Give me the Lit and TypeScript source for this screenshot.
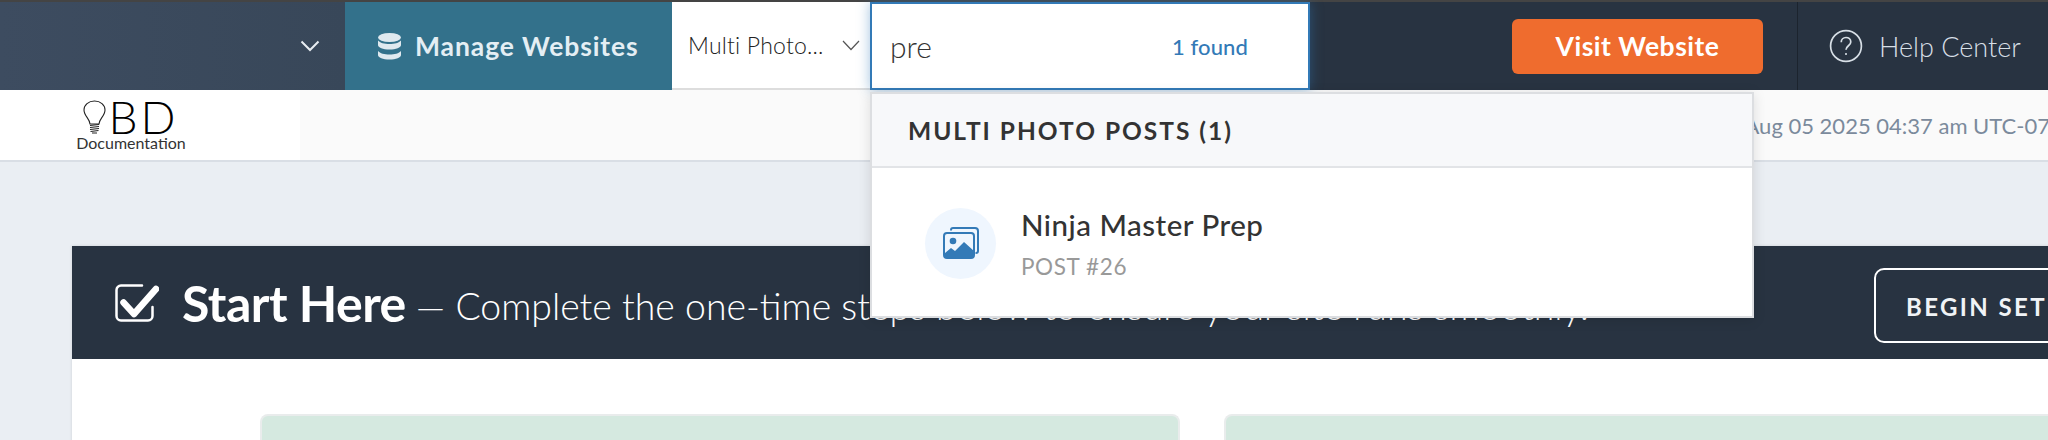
import {LitElement, html, css} from 'lit';
import {customElement} from 'lit/decorators.js';

@customElement('app-root')
export class AppRoot extends LitElement {
  static styles = css`
    :host {
      display: block;
      position: relative;
      width: 2048px;
      height: 440px;
      overflow: hidden;
      background: #eaeef3;
      font-family: Lato, "Noto Sans", sans-serif;
    }
    svg { display: block; flex: none; }

    .nav {
      display: flex;
      height: 88px;
      border-top: 2px solid #444;
      background: #283341;
    }
    .side {
      width: 345px;
      display: flex;
      align-items: center;
      justify-content: flex-end;
      padding-right: 25px;
      box-sizing: border-box;
      background: linear-gradient(90deg, #3d4c60, #384759);
    }
    .manage {
      width: 327px;
      display: flex;
      align-items: center;
      gap: 14px;
      padding-left: 33px;
      box-sizing: border-box;
      background: #33718b;
      color: #e4eef4;
      font-size: 26.5px;
      font-weight: 700;
      letter-spacing: 0.9px;
    }
    .select {
      width: 198px;
      display: flex;
      align-items: center;
      justify-content: space-between;
      padding: 0 10px 0 16px;
      box-sizing: border-box;
      background: #fff;
      border-bottom: 2px solid #ddd;
      color: #222;
      font-size: 23px;
      font-weight: 300;
      letter-spacing: 0.2px;
    }
    .search {
      width: 440px;
      display: flex;
      align-items: center;
      justify-content: space-between;
      padding: 0 60px 0 18px;
      box-sizing: border-box;
      background: #fff;
      border: 2px solid #337ab7;
      box-shadow: 0 0 12px rgba(51, 122, 183, 0.45);
      position: relative;
    }
    .query { font-size: 30px; color: #333; font-weight: 300; }
    .found { font-size: 22px; color: #337ab7; font-weight: 500; letter-spacing: 0.1px; }
    .nav-right {
      flex: 1;
      display: flex;
      align-items: center;
      justify-content: flex-end;
    }
    .visit {
      width: 251px;
      height: 55px;
      display: flex;
      align-items: center;
      justify-content: center;
      border-radius: 6px;
      background: #ef6c2e;
      color: #fff;
      font-size: 26.5px;
      font-weight: 700;
      letter-spacing: 0.5px;
      margin-right: 34px;
    }
    .help {
      width: 251px;
      height: 100%;
      box-sizing: border-box;
      display: flex;
      align-items: center;
      gap: 16px;
      padding-left: 31px;
      border-left: 1px solid #1c242e;
      color: #d7dfe6;
      font-size: 27px;
      font-weight: 300;
    }

    .bar {
      height: 70px;
      display: flex;
      justify-content: space-between;
      background: #fafafa;
      border-bottom: 2px solid #d9dee5;
    }
    .logo {
      width: 300px;
      background: #fff;
      display: flex;
      flex-direction: column;
      align-items: center;
      padding: 8px 38px 0 0;
      box-sizing: border-box;
    }
    .logo-top { display: flex; align-items: center; gap: 2px; height: 37px; }
    .bd { font-size: 46px; line-height: 37px; font-weight: 300; color: #000; letter-spacing: 3px; }
    .doc { font-size: 16px; line-height: 16px; color: #333; font-weight: 400; }
    .date {
      align-self: center;
      white-space: nowrap;
      margin-right: -33px;
      font-size: 22px;
      color: #7b8a9c;
    }

    .page { padding: 84px 0 0 72px; }
    .card {
      width: 2100px;
      background: #fff;
      box-shadow: 0 0 3px rgba(0, 0, 0, 0.12);
    }
    .card-head {
      height: 113px;
      display: flex;
      align-items: center;
      padding-left: 43px;
      box-sizing: border-box;
      background: #283341;
      color: #fff;
    }
    .title { font-size: 50px; font-weight: 700; margin-left: 23px; letter-spacing: -0.5px; }
    .sub { font-size: 37.4px; font-weight: 300; margin: 6px 0 0 10px; white-space: nowrap; }
    .begin {
      position: absolute;
      left: 1874px;
      top: 268px;
      width: 300px;
      height: 75px;
      box-sizing: border-box;
      border: 2px solid #fff;
      border-radius: 10px;
      padding: 22px 0 0 30px;
      color: #f0f3f6;
      font-size: 24px;
      font-weight: 700;
      letter-spacing: 2.4px;
      white-space: nowrap;
    }
    .card-body {
      display: flex;
      gap: 44px;
      padding: 55px 0 0 188px;
    }
    .tile {
      width: 920px;
      height: 60px;
      background: #d5e9e0;
      border: 2px solid #e9ecec;
      border-bottom: 0;
      border-radius: 8px 8px 0 0;
      box-sizing: border-box;
    }
    .tile + .tile { width: 900px; }

    .drop {
      position: absolute;
      left: 870px;
      top: 92px;
      width: 884px;
      height: 226px;
      box-sizing: border-box;
      border: 2px solid #dcdee1;
      background: #fff;
      box-shadow: 0 2px 12px rgba(0, 0, 0, 0.12);
    }
    .drop-head {
      height: 74px;
      display: flex;
      align-items: center;
      padding-left: 36px;
      box-sizing: border-box;
      background: #f7f8fa;
      border-bottom: 2px solid #e2e4e7;
      color: #333;
      font-size: 24.5px;
      font-weight: 700;
      letter-spacing: 2px;
    }
    .hit { display: flex; align-items: center; gap: 25px; padding: 37px 0 0 53px; }
    .hit-icon {
      width: 71px;
      height: 71px;
      border-radius: 50%;
      background: #eff6fe;
      display: flex;
      align-items: center;
      justify-content: center;
    }
    .hit-title { font-size: 29.5px; line-height: 36px; font-weight: 500; color: #333; letter-spacing: 0.5px; margin-top: 2px; }
    .hit-sub { font-size: 22.5px; line-height: 28px; margin-top: 10px; color: #999; letter-spacing: 0.6px; }
  `;

  render() {
    return html`
      <div class="nav">
        <div class="side">
          <svg width="20" height="12" viewBox="0 0 20 12" fill="none" stroke="#e8edf2" stroke-width="2"><path d="M1.5 1.5 10 10l8.5-8.5"/></svg>
        </div>
        <div class="manage">
          <svg width="23" height="27" viewBox="0 0 23 27" fill="#dfe9ef">
            <ellipse cx="11.5" cy="4.5" rx="11.5" ry="4.5"/>
            <path d="M0 7.5c2 2.5 6.500 3.500 11.500 3.500S21 10 23 7.500V12c0 2.500-5 4.500-11.500 4.500S0 14.500 0 12z"/>
            <path d="M0 15c2 2.500 6.500 3.500 11.500 3.500S21 17.500 23 15v4c0 2.500-5 4.500-11.500 4.500S0 21.500 0 19z" transform="translate(0 3)"/>
          </svg>
          <span>Manage Websites</span>
        </div>
        <div class="select">
          <span>Multi Photo...</span>
          <svg width="18" height="11" viewBox="0 0 18 11" fill="none" stroke="#555" stroke-width="1.2"><path d="M1 1l8 8.500L17 1"/></svg>
        </div>
        <div class="search">
          <span class="query">pre</span>
          <span class="found">1 found</span>
        </div>
        <div class="nav-right">
          <div class="visit">Visit Website</div>
          <div class="help">
            <svg width="34" height="34" viewBox="0 0 32 32" fill="none" stroke="#d7dfe6" stroke-width="1.600">
              <circle cx="16" cy="16" r="14.500"/>
              <path d="M11.500 12.500c0-2.800 2-4.500 4.500-4.500s4.500 1.700 4.500 4.200c0 3.500-4.500 3.600-4.500 7.300"/>
              <circle cx="16" cy="23.500" r="1" fill="#d7dfe6" stroke="none"/>
            </svg>
            <span>Help Center</span>
          </div>
        </div>
      </div>

      <div class="bar">
        <div class="logo">
          <div class="logo-top">
            <svg width="23" height="34" viewBox="0 0 23 34" fill="none" stroke="#222" stroke-width="1.100">
              <path d="M7 24c0-5-6-8-6-14C1 5 5.500 1 11.500 1S22 5 22 10c0 6-6 9-6 14z"/>
              <path d="M7 25.500l9-1M7 27.500l9-1M7 29.500l9-1M7.500 31.500l8-1M9 33h5"/>
            </svg>
            <span class="bd">BD</span>
          </div>
          <span class="doc">Documentation</span>
        </div>
        <div class="date">Aug 05 2025 04:37 am UTC-07:00</div>
      </div>

      <div class="page">
        <div class="card">
          <div class="card-head">
            <svg width="44" height="39" viewBox="0 0 44 39" fill="none">
              <path d="M27 2.500H6A4.500 4.500 0 0 0 1.500 7v26A4.500 4.500 0 0 0 6 37.500h27a4.500 4.500 0 0 0 4.500-4.500V24" stroke="#fff" stroke-width="2.500" stroke-linecap="round"/>
              <path d="M8.500 19.500 19 31 41 6" stroke="#fff" stroke-width="6.500" stroke-linejoin="round" stroke-linecap="round"/>
            </svg>
            <span class="title">Start Here</span>
            <span class="sub">— Complete the one-time steps below to ensure your site runs smoothly.</span>
          </div>
          <div class="card-body">
            <div class="tile"></div>
            <div class="tile"></div>
          </div>
        </div>
      </div>
      <div class="begin">BEGIN SETUP</div>

      <div class="drop">
        <div class="drop-head">MULTI PHOTO POSTS (1)</div>
        <div class="hit">
          <div class="hit-icon">
            <svg width="36" height="32" viewBox="0 0 36 32" fill="none">
              <path d="M8 3.500V3a2 2 0 0 1 2-2h22a3 3 0 0 1 3 3v20a2 2 0 0 1-2 2h-.5" stroke="#337ab7" stroke-width="2"/>
              <rect x="1" y="6" width="30" height="25" rx="3" stroke="#337ab7" stroke-width="2"/>
              <circle cx="10" cy="14" r="3.300" fill="#337ab7"/>
              <path d="M2 26l6-5 4 3 9-9 10 9v7H2z" fill="#337ab7"/>
            </svg>
          </div>
          <div>
            <div class="hit-title">Ninja Master Prep</div>
            <div class="hit-sub">POST #26</div>
          </div>
        </div>
      </div>
    `;
  }
}
